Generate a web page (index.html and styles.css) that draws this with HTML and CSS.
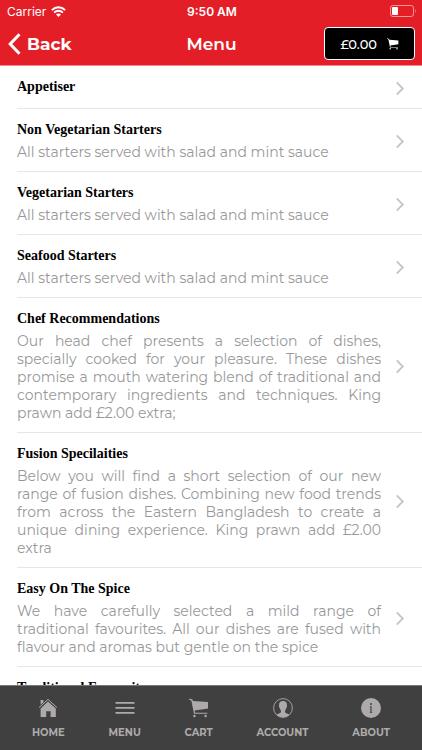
FILE: index.html
```html
<!DOCTYPE html>
<html lang="en">
<head>
    <meta charset="UTF-8">
    <meta name="viewport" content="width=device-width, initial-scale=1.0">
    <title>Menu</title>
    <link rel="stylesheet" href="styles.css">
</head>
<body>
    <svg class="symbols" aria-hidden="true">
        <symbol id="cart" viewBox="0 0 20 20">
            <path d="M0.4 0.4 L3.4 1.6 L4 3 L19 4 V10.6 L5.6 12.4 L6 14.8 H18.3 V15.8 H5 L2.4 2.7 L0 1.4 Z"/>
            <circle cx="5.4" cy="18" r="1.2"/>
            <circle cx="16.6" cy="18" r="1.2"/>
        </symbol>
        <symbol id="arrow" viewBox="0 0 10 16">
            <path d="M1.5 1.5 L8 8 L1.5 14.5" fill="none" stroke="currentColor" stroke-width="1.9"/>
        </symbol>
    </svg>

    <header class="header">
        <div class="status">
            <div class="carrier">
                <span>Carrier</span>
                <svg width="15" height="11" viewBox="0 0 15 11" fill="none" stroke="#fff" stroke-width="1.9">
                    <path d="M0.8 4.1 C4.6 0.3 10.4 0.3 14.2 4.1"/>
                    <path d="M3.1 6.6 C5.6 4.1 9.4 4.1 11.9 6.6"/>
                    <path d="M5 8.4 C6.4 7.1 8.6 7.1 10 8.4 L7.5 10.9 Z" fill="#fff" stroke="none"/>
                </svg>
            </div>
            <span class="time">9:50 AM</span>
            <svg class="battery" width="27" height="12" viewBox="0 0 27 12">
                <rect x="0.5" y="0.5" width="23" height="11" rx="2.5" fill="none" stroke="#f3979a"/>
                <rect x="2" y="2" width="6" height="8" rx="1" fill="#fff"/>
                <path d="M25 4 Q26.6 6 25 8 Z" fill="#f3979a"/>
            </svg>
        </div>
        <div class="nav">
            <a class="back" href="#">
                <svg width="13" height="22" viewBox="0 0 13 22" fill="none" stroke="#fff" stroke-width="3">
                    <path d="M11.5 1.2 L2.2 11 L11.5 20.8"/>
                </svg>
                <span>Back</span>
            </a>
            <h1 class="title">Menu</h1>
            <button class="basket" type="button">
                <span>£0.00</span>
                <svg class="basket-icon"><use href="#cart"/></svg>
            </button>
        </div>
    </header>

    <main class="list">
        <a class="item" href="#">
            <div class="item-text">
                <h2>Appetiser</h2>
            </div>
            <svg class="arrow"><use href="#arrow"/></svg>
        </a>
        <a class="item" href="#">
            <div class="item-text">
                <h2>Non Vegetarian Starters</h2>
                <p>All starters served with salad and mint sauce</p>
            </div>
            <svg class="arrow"><use href="#arrow"/></svg>
        </a>
        <a class="item" href="#">
            <div class="item-text">
                <h2>Vegetarian Starters</h2>
                <p>All starters served with salad and mint sauce</p>
            </div>
            <svg class="arrow"><use href="#arrow"/></svg>
        </a>
        <a class="item" href="#">
            <div class="item-text">
                <h2>Seafood Starters</h2>
                <p>All starters served with salad and mint sauce</p>
            </div>
            <svg class="arrow"><use href="#arrow"/></svg>
        </a>
        <a class="item" href="#">
            <div class="item-text">
                <h2>Chef Recommendations</h2>
                <p>Our head chef presents a selection of dishes, specially cooked for your pleasure. These dishes promise a mouth watering blend of traditional and contemporary ingredients and techniques. King prawn add £2.00 extra;</p>
            </div>
            <svg class="arrow"><use href="#arrow"/></svg>
        </a>
        <a class="item" href="#">
            <div class="item-text">
                <h2>Fusion Specilaities</h2>
                <p>Below you will find a short selection of our new range of fusion dishes. Combining new food trends from across the Eastern Bangladesh to create a unique dining experience. King prawn add £2.00 extra</p>
            </div>
            <svg class="arrow"><use href="#arrow"/></svg>
        </a>
        <a class="item" href="#">
            <div class="item-text">
                <h2>Easy On The Spice</h2>
                <p>We have carefully selected a mild range of traditional favourites. All our dishes are fused with flavour and aromas but gentle on the spice</p>
            </div>
            <svg class="arrow"><use href="#arrow"/></svg>
        </a>
        <a class="item" href="#">
            <div class="item-text">
                <h2>Traditional Favourites</h2>
            </div>
        </a>
    </main>

    <nav class="tabs">
        <a class="tab" href="#">
            <svg viewBox="0 0 20 20">
                <path d="M1 9.6 L10 1.4 L19 9.6" fill="none" stroke="currentColor" stroke-width="1"/>
                <path d="M2.6 2 H5.4 V4.2 L2.6 6.7 Z"/>
                <path d="M10 3.4 L17.8 10.4 V19 H12.6 V13.2 H8.2 V19 H2.6 V10.4 Z"/>
            </svg>
            <span>HOME</span>
        </a>
        <a class="tab" href="#">
            <svg viewBox="0 0 20 20">
                <path d="M0.5 4 H19.5 V5.8 H0.5 Z M0.5 9 H19.5 V10.8 H0.5 Z M0.5 14 H19.5 V15.8 H0.5 Z"/>
            </svg>
            <span>MENU</span>
        </a>
        <a class="tab" href="#">
            <svg viewBox="0 0 20 20"><use href="#cart"/></svg>
            <span>CART</span>
        </a>
        <a class="tab" href="#">
            <svg viewBox="0 0 20 20">
                <circle cx="10" cy="10" r="9.4" fill="none" stroke="currentColor" stroke-width="0.9"/>
                <path d="M10 3 C13 3 14.2 5 13.9 7.6 C14.3 8.4 13.9 9.6 13.3 10 C13 11.3 12.5 12 12.1 12.4 V14.2 C12.8 15.3 15 15.5 16.4 16.7 A9.2 9.2 0 0 1 3.6 16.7 C5 15.5 7.2 15.3 7.9 14.2 V12.4 C7.5 12 7 11.3 6.7 10 C6.1 9.6 5.7 8.4 6.1 7.6 C5.8 5 7 3 10 3 Z"/>
            </svg>
            <span>ACCOUNT</span>
        </a>
        <a class="tab" href="#">
            <svg viewBox="0 0 20 20">
                <circle cx="10" cy="10" r="10"/>
                <circle cx="10" cy="5.9" r="1" fill="#404040"/>
                <path d="M8.8 8.2 H10.6 V14.4 H11.3 V15 H8.6 V14.4 H9.4 V8.9 H8.8 Z" fill="#404040"/>
            </svg>
            <span>ABOUT</span>
        </a>
    </nav>
</body>
</html>
```
FILE: styles.css
```css
* {
    box-sizing: border-box;
}

body {
    margin: 0;
    height: 100vh;
    display: flex;
    flex-direction: column;
    overflow: hidden;
    background: #fff;
    font-family: Montserrat, Inter, sans-serif;
}

a {
    color: inherit;
    text-decoration: none;
}

h1, h2, p {
    margin: 0;
}

.symbols {
    position: absolute;
    width: 0;
    height: 0;
}

/* header */
.header {
    flex: none;
    background: #e31e26;
    border-bottom: 1px solid #f58a8e;
    color: #fff;
}

.status {
    display: grid;
    grid-template-columns: 1fr auto 1fr;
    align-items: center;
    height: 22px;
    padding: 0 5px 0 7px;
    font-family: Inter, sans-serif;
    font-size: 12px;
}

.carrier {
    display: flex;
    align-items: center;
    gap: 5px;
}

.time {
    font-weight: 600;
}

.battery {
    justify-self: end;
}

.nav {
    display: grid;
    grid-template-columns: 1fr auto 1fr;
    align-items: center;
    height: 43px;
    padding: 0 7px 0 8px;
}

.back {
    display: flex;
    align-items: center;
    gap: 6px;
    font-size: 17px;
    font-weight: 700;
}

.title {
    font-size: 17px;
    font-weight: 600;
}

.basket {
    justify-self: end;
    display: flex;
    align-items: center;
    gap: 10px;
    height: 33px;
    padding: 0 15px;
    border: 1px solid #fff;
    border-radius: 4px;
    background: #000;
    color: #fff;
    font-family: inherit;
    font-size: 13px;
    font-weight: 500;
}

.basket-icon {
    width: 12px;
    height: 12px;
    fill: currentColor;
}

/* menu list */
.list {
    flex: 1;
    min-height: 0;
    overflow: hidden;
    padding-left: 17px;
}

.item {
    display: flex;
    align-items: center;
    gap: 14px;
    min-height: 43px;
    padding: 12px 17px 10px 0;
    border-bottom: 1px solid #e6e6e6;
}

.item-text {
    flex: 1;
    align-self: flex-start;
}

.item h2 {
    font-family: "Liberation Serif", serif;
    font-size: 14px;
    font-weight: 700;
    line-height: 18px;
    color: #000;
}

.item p {
    margin-top: 4px;
    font-size: 14px;
    font-weight: 400;
    font-variant-ligatures: none;
    line-height: 18px;
    text-align: justify;
    color: #98989a;
}

.arrow {
    flex: none;
    width: 10px;
    height: 15px;
    color: #c4c4c8;
}

/* bottom tabs */
.tabs {
    flex: none;
    display: flex;
    justify-content: space-between;
    height: 65px;
    padding: 12px 32px 0;
    border-top: 1px solid #777;
    background: #404040;
    color: #aeaaaa;
}

.tab {
    display: flex;
    flex-direction: column;
    align-items: center;
    gap: 8px;
    font-size: 10px;
    font-weight: 700;
    line-height: 14px;
}

.tab svg {
    width: 20px;
    height: 20px;
    fill: currentColor;
}
```
